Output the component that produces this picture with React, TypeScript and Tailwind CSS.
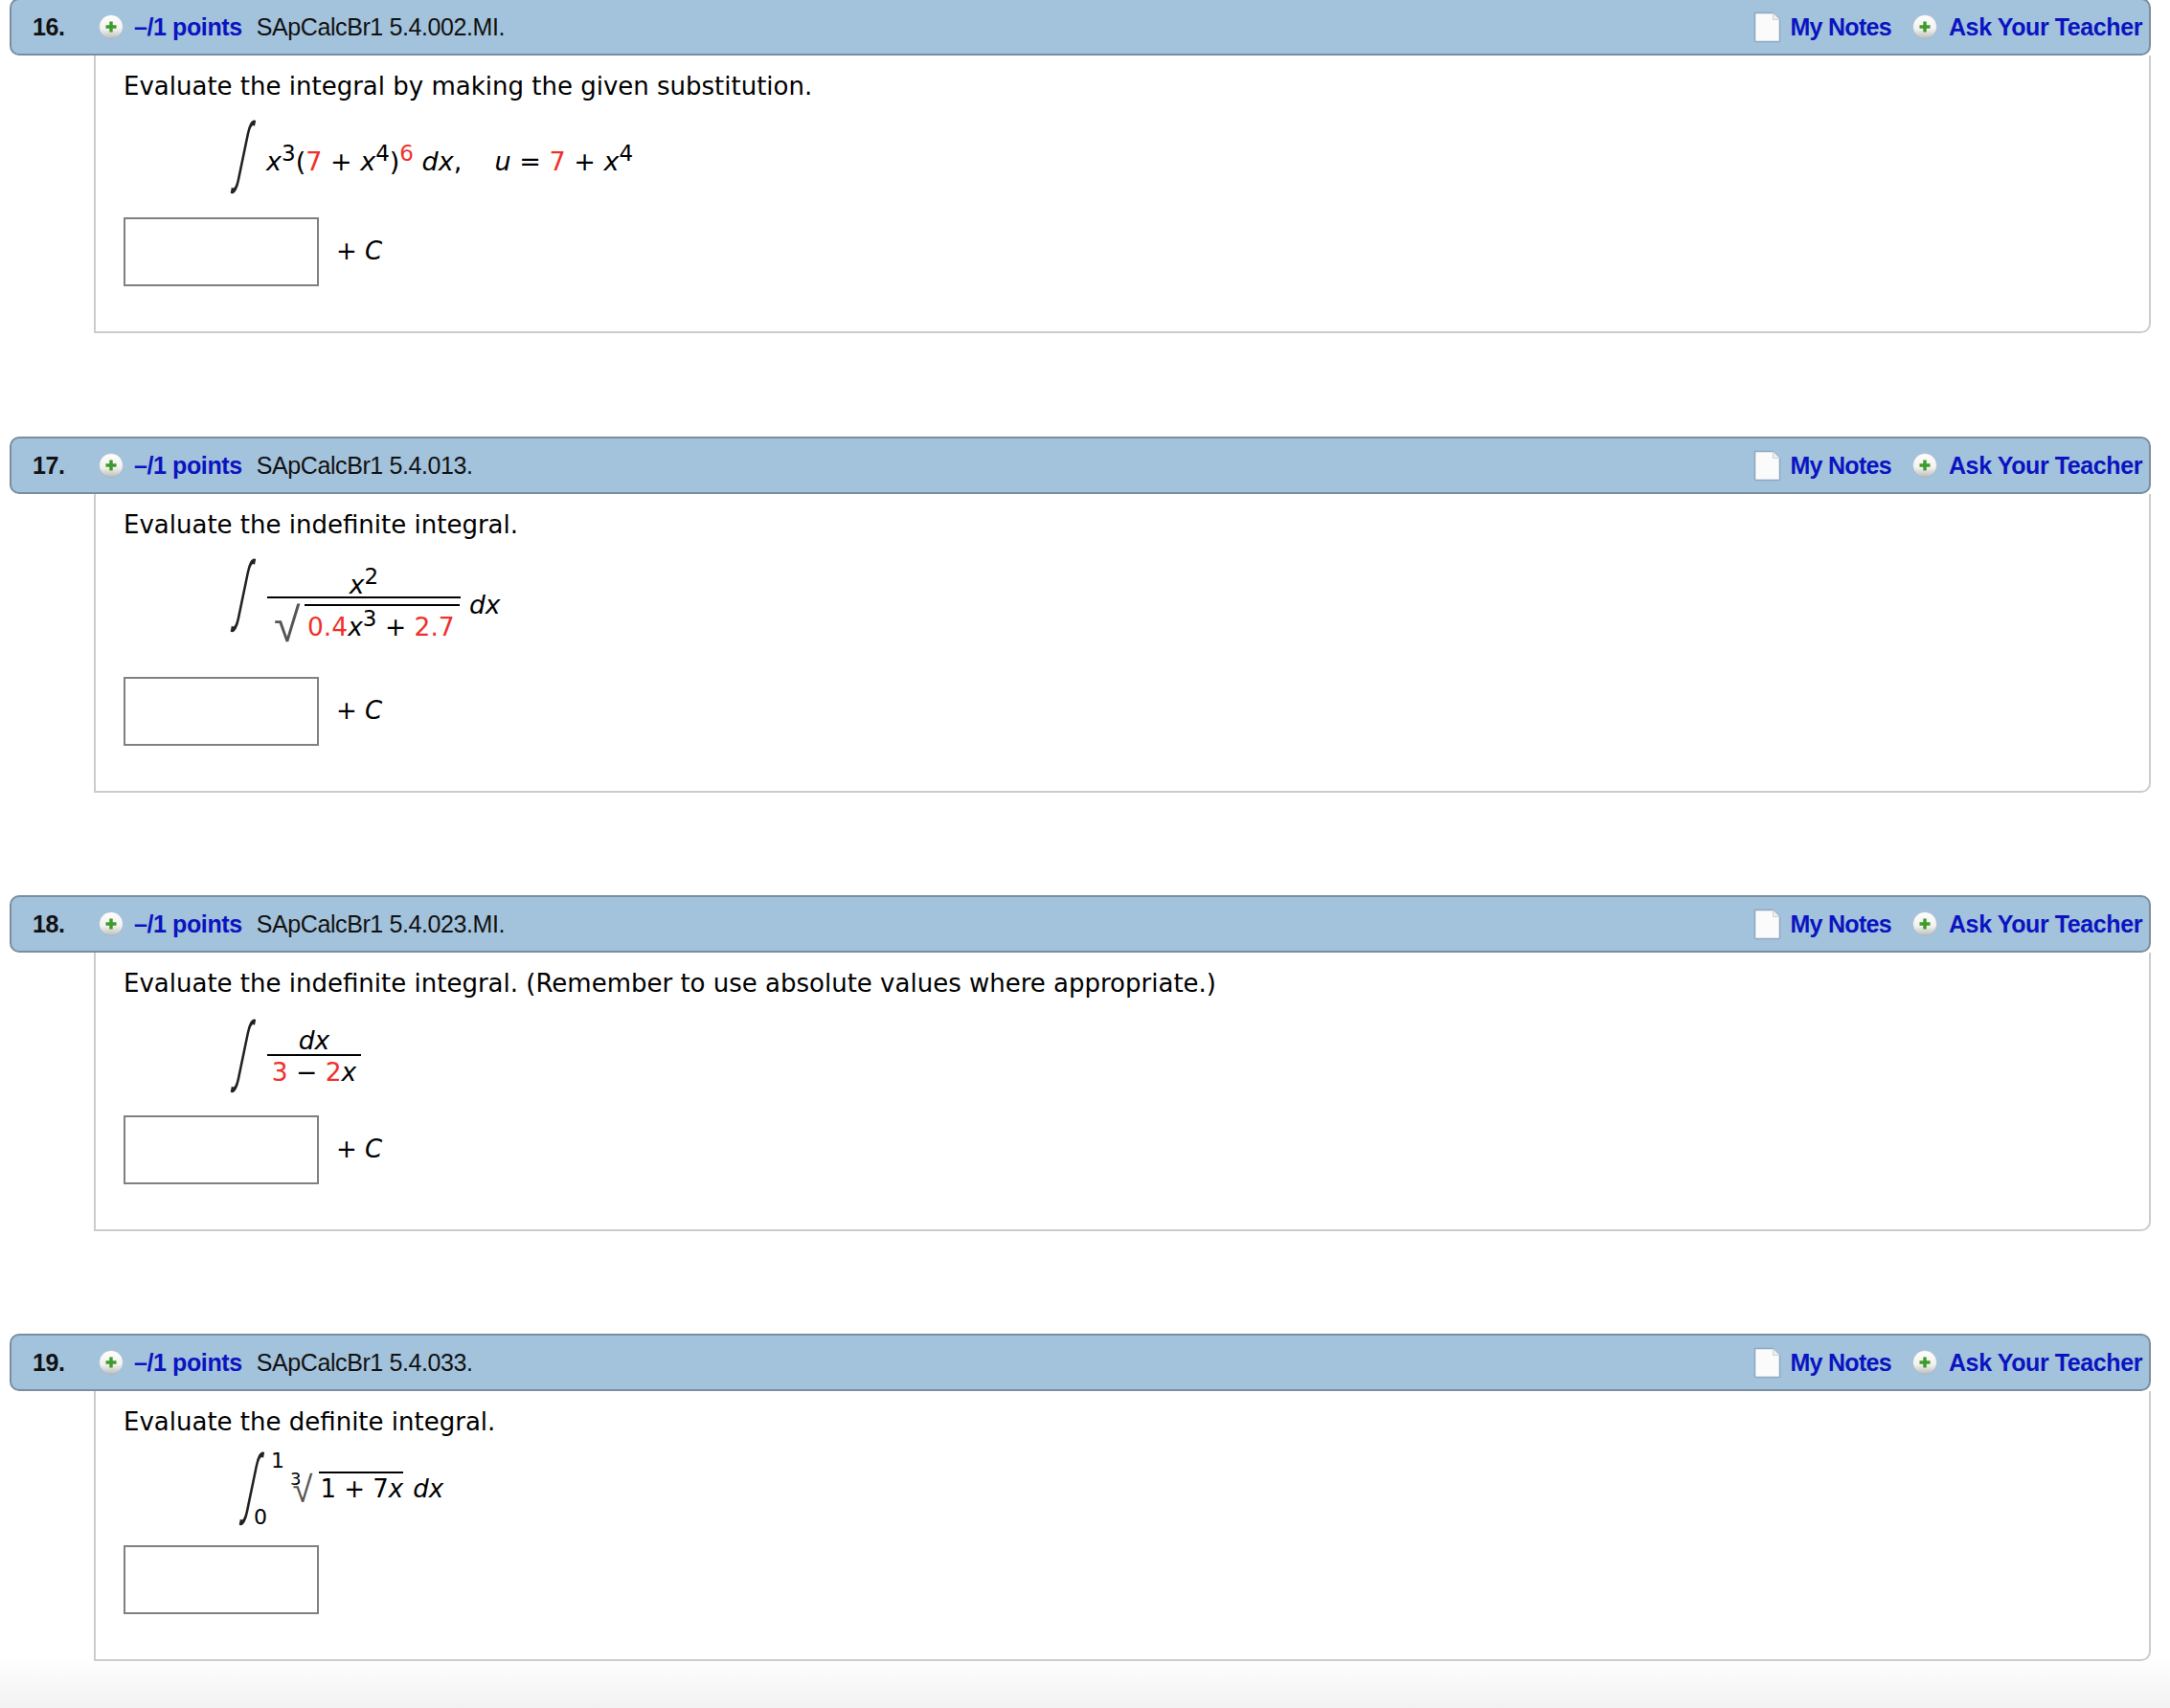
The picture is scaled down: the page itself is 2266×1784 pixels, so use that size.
const mathFont = "font-['DejaVu_Sans',sans-serif]";

function PlusIcon() {
  return (
    <svg width="26" height="26" viewBox="0 0 26 26" className="shrink-0">
      <defs>
        <linearGradient id="plusRing" x1="0" y1="0" x2="0" y2="1">
          <stop offset="0" stopColor="#ffffff" />
          <stop offset="0.6" stopColor="#f1f1ee" />
          <stop offset="1" stopColor="#b9bcb8" />
        </linearGradient>
      </defs>
      <circle cx="13" cy="13" r="12.5" fill="url(#plusRing)" stroke="#9fb4c4" strokeWidth="0.6" />
      <path d="M11.3 7.5h3.4v3.8h3.8v3.4h-3.8v3.8h-3.4v-3.8H7.5v-3.4h3.8z" fill="#3f9a2b" />
    </svg>
  );
}

function NoteIcon() {
  return (
    <svg width="29" height="33" viewBox="0 0 29 33" className="shrink-0">
      <path d="M1.5 1.5h19l7 7v22a1 1 0 0 1-1 1h-24a1 1 0 0 1-1-1z" fill="#fbfbfb" stroke="#8ea8bf" strokeWidth="1.5" />
      <path d="M20.5 1.5v7h7" fill="#eeeeee" stroke="#c6d2dc" strokeWidth="1" />
    </svg>
  );
}

function Header({ num, code }: { num: number; code: string }) {
  return (
    <div className="flex h-[60px] items-center rounded-[10px] border-2 border-[#7a8e9f] bg-[#a3c2dc] font-['Liberation_Sans',sans-serif] text-[25px] leading-none tracking-[-0.4px]">
      <span className="ml-[22px] w-[69px] font-bold text-[#111111]">{num}.</span>
      <PlusIcon />
      <span className="ml-[11px] font-bold text-[#0a14c0]">–/1 points</span>
      <span className="ml-[15px] text-[#111111]">{code}</span>
      <div className="ml-auto flex items-center pr-[7px] font-bold text-[#0a14c0]">
        <NoteIcon />
        <span className="ml-[9px] tracking-[-0.7px]">My Notes</span>
        <span className="ml-[22px]"><PlusIcon /></span>
        <span className="ml-[12px]">Ask Your Teacher</span>
      </div>
    </div>
  );
}

// the sign in the reference is thin and leaning, so the glyph is squeezed and skewed
function Integral() {
  return (
    <span className="-mt-[7px] block h-[78px] w-[30px] scale-x-[0.36] -skew-x-[30deg] text-center font-['Liberation_Sans',sans-serif] text-[81px] leading-[76px] text-[#222222]">
      ∫
    </span>
  );
}

function Sup({ children, red }: { children: React.ReactNode; red?: boolean }) {
  return <span className={`relative -top-[10px] text-[23px] not-italic ${red ? "text-[#f0302a]" : ""}`}>{children}</span>;
}

function Red({ children }: { children: React.ReactNode }) {
  return <span className="text-[#f0302a] not-italic">{children}</span>;
}

function Var({ children }: { children: React.ReactNode }) {
  return <i>{children}</i>;
}

function Question({
  num,
  code,
  text,
  formulaTop,
  formulaHeight,
  gap,
  plusC = true,
  children,
}: {
  num: number;
  code: string;
  text: string;
  formulaTop: number;
  formulaHeight: number;
  gap: number;
  plusC?: boolean;
  children: React.ReactNode;
}) {
  return (
    <section style={{ marginBottom: gap }}>
      <Header num={num} code={code} />
      <div className={`ml-[88px] rounded-br-[10px] border-x-2 border-b-2 border-[#cccccc] pt-[17px] pb-[47px] pl-[29px] ${mathFont} text-[26px] leading-[30px] text-black`}>
        <p>{text}</p>
        <div style={{ height: formulaHeight, paddingTop: formulaTop }} className="pl-[111px]">
          <div className="flex items-start">{children}</div>
        </div>
        <div className="flex items-center">
          <div className="h-[72px] w-[204px] border-2 border-[#808080] bg-white" />
          {plusC && <span className="mb-[2px] ml-[18px]">+ <Var>C</Var></span>}
        </div>
      </div>
    </section>
  );
}

export default function App() {
  return (
    <div className="relative h-[1784px] w-[2266px] overflow-hidden bg-gradient-to-b from-white from-[97%] to-[#f2f2f2] pr-[20px] pl-[10px]">
      <div className="-mt-[2px]">
        <Question num={16} code="SApCalcBr1 5.4.002.MI." text="Evaluate the integral by making the given substitution." formulaTop={21} formulaHeight={122} gap={108}>
          <Integral />
          <span className="mt-[28px] ml-[8px] text-[27px] whitespace-pre">
            <Var>x</Var><Sup>3</Sup>(<Red>7</Red> + <Var>x</Var><Sup>4</Sup>)<Sup red>6</Sup> <Var>dx</Var>,    <Var>u</Var> = <Red>7</Red> + <Var>x</Var><Sup>4</Sup>
          </span>
        </Question>
        <Question num={17} code="SApCalcBr1 5.4.013." text="Evaluate the indefinite integral." formulaTop={21} formulaHeight={144} gap={107}>
          <Integral />
          <div className="ml-[9px] flex w-[202px] flex-col items-center text-[26.5px]">
            <span className="h-[30px] leading-[53px]"><Var>x</Var><Sup>2</Sup></span>
            <div className="mt-[9px] h-[2px] w-full bg-black" />
            <div className="mt-[6px] flex items-start self-start pl-[7px]">
              <span className="-mt-[8px] w-[32px] text-[50px] leading-[60px] font-extralight text-[#555555]">√</span>
              <span className="h-[36px] border-t-2 border-black pr-[5px] pl-[3px] leading-[44px] whitespace-pre">
                <Red>0.4</Red><Var>x</Var><Sup>3</Sup> + <Red>2.7</Red>
              </span>
            </div>
          </div>
          <span className="mt-[33px] ml-[9px] text-[26.5px]"><Var>dx</Var></span>
        </Question>
        <Question num={18} code="SApCalcBr1 5.4.023.MI." text="Evaluate the indefinite integral. (Remember to use absolute values where appropriate.)" formulaTop={23} formulaHeight={123} gap={107}>
          <Integral />
          <div className="ml-[9px] flex w-[98px] flex-col items-center text-[26.5px]">
            <span className="mt-[7px]"><Var>dx</Var></span>
            <div className="-mt-[1px] h-[2px] w-full bg-black" />
            <span className="mt-[2px] whitespace-pre"><Red>3</Red> − <Red>2</Red><Var>x</Var></span>
          </div>
        </Question>
        <Question num={19} code="SApCalcBr1 5.4.033." text="Evaluate the definite integral." formulaTop={17} formulaHeight={114} gap={0} plusC={false}>
          <span className="ml-[9px]"><Integral /></span>
          <div className="-ml-[14px] flex h-[78px] flex-col justify-between text-[22px] leading-[24px]">
            <span className="ml-[18px] -mt-[3px]">1</span>
            <span className="-mb-[2px]">0</span>
          </div>
          <div className="mt-[20px] ml-[6px] flex items-start">
            <span className="-mt-[2px] text-[18px] leading-[20px]">3</span>
            <span className="-ml-[9px] -mt-[4px] w-[28px] text-[38px] leading-[46px] font-extralight text-[#555555]">√</span>
            <span className="h-[36px] border-t-2 border-black pl-[1px] leading-[32px] whitespace-pre">1 + 7<Var>x</Var></span>
            <span className="ml-[10px] mt-[2px] leading-[32px]"><Var>dx</Var></span>
          </div>
        </Question>
      </div>
    </div>
  );
}
